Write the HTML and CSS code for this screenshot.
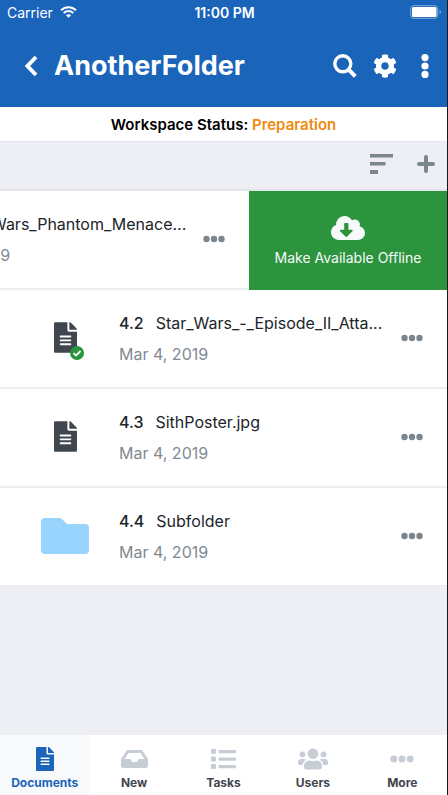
FILE: index.html
```html
<!DOCTYPE html>
<html lang="en">
<head>
<meta charset="utf-8">
<meta name="viewport" content="width=device-width, initial-scale=1">
<title>AnotherFolder</title>
<link rel="stylesheet" href="styles.css">
</head>
<body>
<svg class="sprite" aria-hidden="true">
  <symbol id="file" viewBox="0 0 384 512"><path d="M224 136V0H24C10.700 0 0 10.700 0 24v464c0 13.300 10.700 24 24 24h336c13.300 0 24-10.700 24-24V160H248c-13.200 0-24-10.800-24-24zm64 236c0 6.600-5.400 12-12 12H108c-6.600 0-12-5.400-12-12v-8c0-6.600 5.400-12 12-12h168c6.600 0 12 5.400 12 12v8zm0-64c0 6.600-5.400 12-12 12H108c-6.600 0-12-5.400-12-12v-8c0-6.600 5.400-12 12-12h168c6.600 0 12 5.400 12 12v8zm0-72v8c0 6.600-5.400 12-12 12H108c-6.600 0-12-5.400-12-12v-8c0-6.600 5.400-12 12-12h168c6.600 0 12 5.400 12 12zm96-114.100v6.100H256V0h6.100c6.400 0 12.500 2.500 17 7l97.900 98c4.500 4.500 7 10.600 7 16.900z"/></symbol>
  <symbol id="dots" viewBox="0 0 22 8"><circle cx="3.500" cy="4" r="3.200"/><circle cx="11" cy="4" r="3.200"/><circle cx="18.500" cy="4" r="3.200"/></symbol>
</svg>

<header class="header">
  <div class="system">
    <span class="carrier">Carrier
      <svg width="17" height="12" viewBox="0 0 17 12" fill="none" stroke="#fff" stroke-width="2"><path d="M1 4.300C5.200.2 11.800.2 16 4.300M3.700 7c2.700-2.600 6.900-2.600 9.600 0"/><path d="M8.500 11.700L5.900 9.200c1.500-1.300 3.700-1.300 5.200 0z" fill="#fff" stroke="none"/></svg>
    </span>
    <time class="clock">11:00 PM</time>
    <svg class="battery" width="32" height="14" viewBox="0 0 32 14"><rect x=".7" y=".7" width="27" height="12.600" rx="3" fill="none" stroke="#fff" stroke-opacity=".45"/><rect x="2" y="2" width="24.500" height="10" rx="1.500" fill="#fff"/><path d="M29.500 4.800c2 .8 2 3.600 0 4.400z" fill="#fff" fill-opacity=".45"/></svg>
  </div>
  <div class="titlebar">
    <button class="icon back" aria-label="Back"><svg width="14" height="22" viewBox="0 0 14 22" fill="none" stroke="#fff" stroke-width="4"><path d="M12 2L3.500 11L12 20"/></svg></button>
    <h1>AnotherFolder</h1>
    <button class="icon" aria-label="Search"><svg width="24" height="24" viewBox="0 0 24 24" fill="none" stroke="#fff"><circle cx="9.800" cy="9.800" r="8" stroke-width="3.400"/><path d="M15.500 15.500l6.800 6.800" stroke-width="4"/></svg></button>
    <button class="icon" aria-label="Settings"><svg width="24" height="24" viewBox="0 0 512 512" fill="#fff"><path d="M487.400 315.700l-42.600-24.600c4.300-23.200 4.300-47 0-70.200l42.600-24.600c4.900-2.800 7.100-8.600 5.500-14-11.100-35.600-30-67.800-54.700-94.600-3.800-4.100-10-5.100-14.800-2.300L380.800 110c-17.900-15.400-38.500-27.300-60.800-35.100V25.800c0-5.600-3.900-10.500-9.400-11.700-36.700-8.200-74.300-7.800-109.200 0-5.500 1.200-9.400 6.100-9.400 11.700V75c-22.200 7.900-42.800 19.800-60.800 35.100L88.700 85.500c-4.900-2.800-11-1.900-14.800 2.300-24.700 26.700-43.600 58.900-54.700 94.600-1.700 5.400.6 11.200 5.500 14L67.300 221c-4.300 23.200-4.300 47 0 70.200l-42.600 24.600c-4.900 2.800-7.100 8.600-5.500 14 11.100 35.600 30 67.800 54.700 94.600 3.800 4.100 10 5.100 14.800 2.300l42.600-24.600c17.900 15.400 38.500 27.300 60.800 35.100v49.200c0 5.600 3.900 10.500 9.400 11.700 36.700 8.200 74.300 7.800 109.200 0 5.500-1.200 9.400-6.100 9.400-11.700v-49.200c22.200-7.900 42.800-19.800 60.800-35.100l42.600 24.600c4.900 2.800 11 1.900 14.800-2.300 24.700-26.700 43.600-58.900 54.700-94.600 1.500-5.500-.7-11.300-5.600-14.100zM256 336c-44.100 0-80-35.900-80-80s35.900-80 80-80 80 35.900 80 80-35.900 80-80 80z"/></svg></button>
    <button class="icon menu" aria-label="Menu"><svg width="8" height="24" viewBox="0 0 8 24" fill="#fff"><circle cx="4" cy="3.600" r="3.600"/><circle cx="4" cy="12" r="3.600"/><circle cx="4" cy="20.400" r="3.600"/></svg></button>
  </div>
</header>

<p class="status">Workspace Status: <span class="phase">Preparation</span></p>

<div class="toolbar">
  <button class="icon" aria-label="Sort"><svg width="23" height="20" viewBox="0 0 23 20" fill="#7b868f"><path d="M0 0h23v3.500H0zM0 8h15.500v3.500H0zM0 16h8v4H0z"/></svg></button>
  <button class="icon" aria-label="Add"><svg width="18" height="18" viewBox="0 0 18 18" stroke="#7b868f" stroke-width="4" stroke-linecap="round"><path d="M9 2v14M2 9h14"/></svg></button>
</div>

<main>
  <ul class="list">
    <li class="row swiped">
      <div class="item">
        <span class="thumb"><svg class="doc"><use href="#file"/></svg></span>
        <div class="text"><p class="name"><span class="num">4.1</span><span class="title">Star_Wars_Phantom_Menace...</span></p><p class="date">Mar 4, 2019</p></div>
        <button class="icon more" aria-label="Options"><svg width="22" height="8"><use href="#dots"/></svg></button>
      </div>
      <button class="offline">
        <svg width="34" height="24" viewBox="0 32 640 448" fill="#f8f9fb"><path d="M537.600 226.600c4.100-10.700 6.400-22.400 6.400-34.600 0-53-43-96-96-96-19.700 0-38.100 6-53.300 16.200C367 64.200 315.300 32 256 32c-88.400 0-160 71.600-160 160 0 2.700.1 5.400.2 8.100C40.200 219.800 0 273.200 0 336c0 79.500 64.500 144 144 144h368c70.700 0 128-57.300 128-128 0-61.900-44-113.600-102.400-125.400zm-132.900 88.700L299.300 420.700c-6.200 6.200-16.400 6.200-22.600 0L171.300 315.300c-10.100-10.100-2.900-27.300 11.300-27.300H248V176c0-8.800 7.200-16 16-16h48c8.800 0 16 7.200 16 16v112h65.400c14.200 0 21.400 17.200 11.300 27.300z"/></svg>
        Make Available Offline
      </button>
    </li>
    <li class="row">
      <div class="item">
        <span class="thumb"><svg class="doc"><use href="#file"/></svg><svg class="check" viewBox="0 0 14 14"><circle cx="7" cy="7" r="7" fill="#29953d"/><path d="M3.500 7.200l2.500 2.400 4.500-4.600" fill="none" stroke="#fff" stroke-width="1.800"/></svg></span>
        <div class="text"><p class="name"><span class="num">4.2</span><span class="title">Star_Wars_-_Episode_II_Atta...</span></p><p class="date">Mar 4, 2019</p></div>
        <button class="icon more" aria-label="Options"><svg width="22" height="8"><use href="#dots"/></svg></button>
      </div>
    </li>
    <li class="row">
      <div class="item">
        <span class="thumb"><svg class="doc"><use href="#file"/></svg></span>
        <div class="text"><p class="name"><span class="num">4.3</span><span class="title">SithPoster.jpg</span></p><p class="date">Mar 4, 2019</p></div>
        <button class="icon more" aria-label="Options"><svg width="22" height="8"><use href="#dots"/></svg></button>
      </div>
    </li>
    <li class="row">
      <div class="item">
        <span class="thumb"><svg width="48" height="36" viewBox="0 0 48 36" fill="#99d4ff"><path d="M4 0h14.500c1 0 1.800.4 2.500 1l5 5H44a4 4 0 0 1 4 4v22a4 4 0 0 1-4 4H4a4 4 0 0 1-4-4V4a4 4 0 0 1 4-4z"/></svg></span>
        <div class="text"><p class="name"><span class="num">4.4</span><span class="title">Subfolder</span></p><p class="date">Mar 4, 2019</p></div>
        <button class="icon more" aria-label="Options"><svg width="22" height="8"><use href="#dots"/></svg></button>
      </div>
    </li>
  </ul>
</main>

<nav class="tabs">
  <a class="tab active" href="#documents"><svg width="18" height="24"><use href="#file"/></svg>Documents</a>
  <a class="tab" href="#new"><svg width="27" height="24" viewBox="0 0 576 512"><path d="M567.900 243.900L462.400 85.400A48 48 0 0 0 422.400 64H153.600a48 48 0 0 0-40 21.400L8.100 243.900A48 48 0 0 0 0 270.500V400c0 26.500 21.500 48 48 48h480c26.500 0 48-21.500 48-48V270.500a48 48 0 0 0-8.100-26.600zM162.300 128h251.500l85.300 128H376l-32 64H232l-32-64H77z"/></svg>New</a>
  <a class="tab" href="#tasks"><svg width="25" height="24" viewBox="0 0 25 24"><rect y="2" width="5" height="5" rx="1"/><rect y="9.500" width="5" height="5" rx="1"/><rect y="17" width="5" height="5" rx="1"/><rect x="7.500" y="3" width="17.500" height="3.200" rx="1"/><rect x="7.500" y="10.500" width="17.500" height="3.200" rx="1"/><rect x="7.500" y="18" width="17.500" height="3.200" rx="1"/></svg>Tasks</a>
  <a class="tab" href="#users"><svg width="30" height="24" viewBox="0 0 640 512"><path d="M96 224c35.300 0 64-28.700 64-64s-28.700-64-64-64-64 28.700-64 64 28.700 64 64 64zm448 0c35.300 0 64-28.700 64-64s-28.700-64-64-64-64 28.700-64 64 28.700 64 64 64zm32 32h-64c-17.600 0-33.500 7.100-45.100 18.600 40.300 22.100 68.900 62 75.100 109.400h66c17.700 0 32-14.300 32-32v-32c0-35.300-28.700-64-64-64zm-256 0c61.900 0 112-50.100 112-112S381.900 32 320 32 208 82.100 208 144s50.100 112 112 112zm76.800 32h-8.300c-20.800 10-43.900 16-68.500 16s-47.600-6-68.500-16h-8.300C179.600 288 128 339.600 128 403.200V432c0 26.500 21.500 48 48 48h288c26.500 0 48-21.500 48-48v-28.800c0-63.600-51.600-115.200-115.200-115.200zm-223.700-13.400C161.500 263.100 145.600 256 128 256H64c-35.300 0-64 28.700-64 64v32c0 17.700 14.300 32 32 32h65.900c6.300-47.400 34.900-87.300 75.200-109.400z"/></svg>Users</a>
  <a class="tab" href="#more"><svg width="24" height="24"><use href="#dots"/></svg>More</a>
</nav>
</body>
</html>
```
FILE: styles.css
```css
* { box-sizing: border-box; }

body {
  margin: 0;
  min-height: 100vh;
  display: flex;
  flex-direction: column;
  overflow-x: hidden;
  border-right: 1px solid #14181d;
  background: #eeeff4;
  color: #212529;
  font-family: Inter, "Liberation Sans", sans-serif;
}

h1, p, ul { margin: 0; padding: 0; }
svg { display: block; flex: none; }
.sprite { position: absolute; width: 0; height: 0; }

button {
  border: 0;
  padding: 0;
  background: none;
  font: inherit;
  cursor: pointer;
}

.icon {
  flex: none;
  display: flex;
  align-items: center;
  justify-content: center;
}

.header {
  height: 107px;
  background: #1a64ba;
  color: #fff;
}

.system {
  display: grid;
  grid-template-columns: 1fr auto 1fr;
  align-items: center;
  height: 24px;
  padding: 0 5px 0 7px;
  font-size: 14px;
}

.carrier { display: flex; align-items: center; gap: 7px; }
.clock { font-weight: 600; }
.battery { justify-self: end; }

.titlebar {
  display: flex;
  align-items: center;
  gap: 16px;
  height: 84px;
  padding: 0 10px 0 24px;
}

.titlebar h1 {
  flex: 1;
  font-size: 27px;
  line-height: 32px;
  font-weight: 700;
}

.menu { width: 24px; }

.status {
  height: 34px;
  background: #fff;
  color: #000;
  font-size: 15px;
  line-height: 36px;
  font-weight: 600;
  text-align: center;
}

.phase { color: #ed8b0e; }

.toolbar {
  display: flex;
  align-items: center;
  justify-content: flex-end;
  gap: 24px;
  height: 50px;
  padding: 0 12px 3px;
  border-top: 1px solid #e3e5e9;
  border-bottom: 2px solid #e5e6ea;
}

.list { list-style: none; }

.row {
  display: flex;
  height: 99px;
  overflow: hidden;
  background: #fff;
}

.swiped { justify-content: flex-end; }

.item {
  flex: 0 0 100%;
  display: flex;
  align-items: center;
  padding: 0 24px 2px 0;
  border-bottom: 2px solid #eceef1;
}

.thumb {
  position: relative;
  display: flex;
  justify-content: center;
  width: 48px;
  margin: 0 30px 0 41px;
}

.doc { width: 23px; height: 31px; fill: #3f464e; }

.check {
  position: absolute;
  right: 5px;
  bottom: -7px;
  width: 14px;
  height: 14px;
}

.text { flex: 1; min-width: 0; padding-top: 2px; }

.name {
  display: flex;
  gap: 12px;
  margin-bottom: 7px;
  font-size: 16px;
  line-height: 24px;
  white-space: nowrap;
}

.num { font-weight: 500; }
.date { color: #7f8992; font-size: 16px; line-height: 24px; }
.more { fill: #7b868f; }

.offline {
  flex: 0 0 198px;
  display: flex;
  flex-direction: column;
  align-items: center;
  justify-content: center;
  gap: 8px;
  padding-top: 2px;
  background: #2c943d;
  color: #f8f9fb;
  font-size: 14px;
  line-height: 20px;
}

.tabs {
  display: flex;
  height: 60px;
  margin-top: auto;
  background: #fff;
}

.tab {
  flex: 1 1 0;
  display: flex;
  flex-direction: column;
  align-items: center;
  justify-content: center;
  gap: 4px;
  padding-top: 8px;
  color: #3f464e;
  fill: #c7cdd5;
  font-size: 12px;
  line-height: 16px;
  font-weight: 700;
  text-decoration: none;
}

.active {
  background: #f8f9fb;
  color: #1a64ba;
  fill: #1a64ba;
}
```
